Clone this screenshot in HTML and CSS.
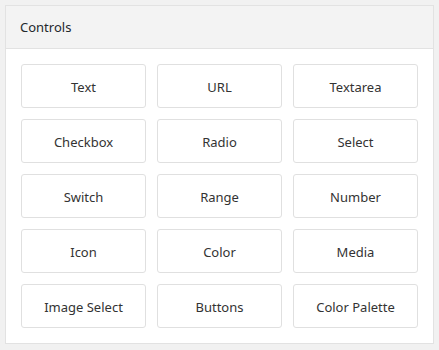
FILE: index.html
```html
<!DOCTYPE html>
<html lang="en">
<head>
  <meta charset="UTF-8" />
  <title>Controls</title>
  <link rel="stylesheet" href="styles.css">
</head>
<body>
  <div class="panel">
    <div class="panel-header">Controls</div>
    <div class="panel-body">
      <button class="control">Text</button>
      <button class="control">URL</button>
      <button class="control">Textarea</button>
      <button class="control">Checkbox</button>
      <button class="control">Radio</button>
      <button class="control">Select</button>
      <button class="control">Switch</button>
      <button class="control">Range</button>
      <button class="control">Number</button>
      <button class="control">Icon</button>
      <button class="control">Color</button>
      <button class="control">Media</button>
      <button class="control">Image Select</button>
      <button class="control">Buttons</button>
      <button class="control">Color Palette</button>
    </div>
  </div>
</body>
</html>
```

FILE: styles.css
```css
body {
  font-family: "Noto Sans", "Open Sans", sans-serif;
  background-color: #f1f1f1;
  color: #333;
  margin: 0;
  padding: 5px;
}
.panel {
  background-color: #fff;
  border: 1px solid #e2e2e2;
}
.panel-header {
  background-color: #f3f3f3;
  border-bottom: 1px solid #e2e2e2;
  height: 42px;
  line-height: 43px;
  padding: 0 14px;
  font-size: 13px;
  color: #23282d;
}
.panel-body {
  display: grid;
  grid-template-columns: repeat(3, 125px);
  grid-auto-rows: 44px;
  gap: 11px;
  padding: 15px;
}
.control {
  background-color: #fff;
  border: 1px solid #e0e0e0;
  border-radius: 3px;
  font-family: inherit;
  font-size: 13px;
  color: #333;
  padding: 2px 0 0;
  cursor: pointer;
}
.control:hover {
  border-color: #c8c8c8;
}
```
